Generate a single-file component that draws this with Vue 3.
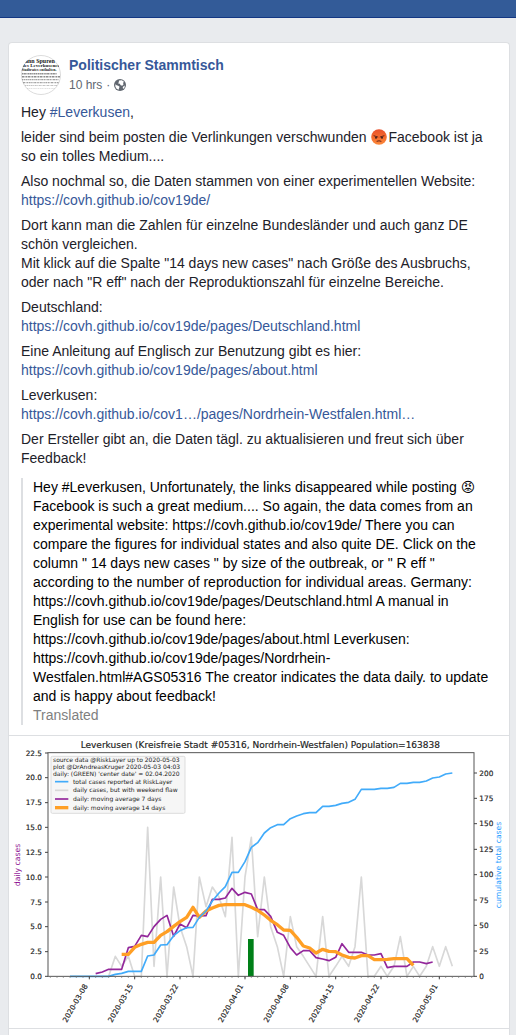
<script setup>
const originX = 241
const dayStep = 19.44

// Heights in chart units below the inner group's origin; zero cases sits at 304.
const total = [304, 304, 304, 304, 304, 304, 304, 298, 295, 289, 289, 289, 243, 240, 210, 209, 182, 167, 158, 157, 127, 108, 78, 54, 35, -8, -8, -40, -83, -97, -126, -142, -151, -151, -169, -177, -184, -187, -187, -206, -206, -209, -215, -218, -227, -257, -257, -257, -260, -260, -263, -275, -275, -278, -278, -282, -291, -294, -303, -306]
const cases = [0, 2, 1, 2, 0, 0, 15, 1, 10, 0, 9, 5, 3, 0, 10, 7, 9, 8, 6, 14, 0, 10, 14, 4, 10, 5, 3, 0, 6, 3, 2, 1, 0, 6, 0, 1, 2, 1, 3, 10, 0, 0, 1, 0, 1, 4, 0, 1, 0, 1, 3, 1, 3, 1]
const weekAverage = [296, 291, 283, 283, 283, 218, 214, 181, 185, 155, 133, 121, 184, 147, 158, 121, 123, 122, 73, 73, 69, 40, 61, 52, 57, 104, 104, 124, 172, 181, 218, 240, 227, 227, 248, 252, 257, 247, 206, 232, 232, 232, 240, 240, 236, 278, 274, 274, 274, 261, 261, 266, 261]
const fortnightAverage = [238, 238, 217, 208, 202, 202, 181, 170, 154, 140, 127, 97, 127, 108, 99, 91, 89, 89, 89, 89, 97, 106, 120, 136, 149, 165, 166, 187, 213, 219, 234, 223, 229, 230, 240, 247, 249, 242, 242, 254, 254, 253, 251, 251, 251, 271]

const dayX = (day) => Math.round(originX + dayStep * day)
const line = (values, start) => values.map((v, i) => `${dayX(start + i)},${v}`).join(' ')

const totalLine = line(total, -3)
const casesLine = line(cases.map((c) => Math.round(304 - c * 29.8)), 3)
const weekLine = line(weekAverage, 1)
const fortnightLine = line(fortnightAverage, 5)

const leftTicks = Array.from({ length: 10 }, (_, i) => ({
  label: (i * 2.5).toFixed(1),
  y: Math.round(304 - i * 74.5)
}))
const rightTicks = Array.from({ length: 9 }, (_, i) => ({
  label: String(i * 25),
  y: Math.round(304 - i * 76.3)
}))
const dateTicks = [
  { label: '2020-03-08', day: 0 },
  { label: '2020-03-15', day: 7 },
  { label: '2020-03-22', day: 14 },
  { label: '2020-04-01', day: 24 },
  { label: '2020-04-08', day: 31 },
  { label: '2020-04-15', day: 38 },
  { label: '2020-04-22', day: 45 },
  { label: '2020-05-01', day: 54 }
]
const minorDays = Array.from({ length: 66 }, (_, i) => i - 6)
const legend = [
  { label: 'total cases reported at RiskLayer', kind: 'total' },
  { label: 'daily cases, but with weekend flaw', kind: 'cases' },
  { label: 'daily: moving average 7 days', kind: 'week' },
  { label: 'daily: moving average 14 days', kind: 'fortnight' }
]
</script>

<template>
  <div class="page">
    <header class="topbar"></header>
    <article class="card">
      <div class="body">
        <div class="author">
          <a href="#" class="avatar" aria-label="Politischer Stammtisch">
            <svg viewBox="0 0 40 40" width="40" height="40">
              <defs>
                <clipPath id="round"><circle cx="20" cy="20" r="20" /></clipPath>
              </defs>
              <circle cx="20" cy="20" r="19.5" fill="#fff" stroke="#dcdcdc" />
              <g clip-path="url(#round)" class="print">
                <text x="4" y="8" font-size="6">ann Spuren</text>
                <text x="1" y="12" font-size="5">des Leverkusener</text>
                <text x="0" y="16" font-size="4">Stadtrates enthalten.</text>
                <g stroke="#444" stroke-width="1.4" opacity="0.6">
                  <path d="M1 18.700H36" stroke-dasharray="1.500 .4 2 .5 1 .4" />
                  <path d="M1 21.700H39" stroke-dasharray="2 .5 1 .4 1.500 .6" />
                </g>
                <g stroke="#666" stroke-width="1.2" opacity="0.6">
                  <path d="M1 24.700H38" stroke-dasharray="1 .5 2 .5 1.500 .4" />
                  <path d="M2 27.700H38" stroke-dasharray="2 .6 1 .4 1 .6" />
                </g>
                <g stroke="#999" opacity="0.6">
                  <path d="M4 30.500H36" stroke-dasharray="1 .5 2 .6" />
                  <path d="M6 33.500H34" stroke-dasharray="1.500 .6 1 .5" opacity="0.5" />
                </g>
              </g>
            </svg>
          </a>
          <div class="who">
            <a href="#" class="name">Politischer Stammtisch</a>
            <div class="meta">
              <span>10 hrs</span><span>·</span>
              <svg viewBox="0 0 12 12" width="12" height="12" role="img" aria-label="Public">
                <circle cx="6" cy="6" r="6" fill="#616770" />
                <path d="M5 1.500L7.800 1.200 10 2.800 9 4 9.600 5.200 8.300 6.800 6.700 6.200 5.800 4.800 4.200 4.600 4.800 3Z" fill="#fff" />
                <path d="M1.300 5.200L2.600 6.200 4.200 6.800 5.600 7.800 5 9.200 4.600 10.800 2.600 9.700 1.400 7.800Z" fill="#fff" />
                <path d="M10.900 6.500L10.500 8.300 9.200 9.900 8.700 8.800 9.500 7.300Z" fill="#fff" />
              </svg>
            </div>
          </div>
        </div>

        <div class="message">
          <p>Hey <a href="#">#Leverkusen</a>,</p>
          <p>leider sind beim posten die Verlinkungen verschwunden <svg class="emoji" viewBox="0 0 16 16" width="16" height="16" role="img" aria-label="pouting face">
            <defs>
              <linearGradient id="rage" x1="0" y1="0" x2="0" y2="1">
                <stop offset="0" stop-color="#e8502c" />
                <stop offset="0.5" stop-color="#f56a2c" />
                <stop offset="1" stop-color="#fb8a3c" />
              </linearGradient>
            </defs>
            <circle cx="8" cy="8" r="7.800" fill="url(#rage)" />
            <path d="M3 6.800L6.800 8M13 6.800L9.200 8" stroke="#64231a" stroke-linecap="round" />
            <circle cx="5" cy="8.800" r="1" fill="#40201c" />
            <circle cx="11" cy="8.800" r="1" fill="#40201c" />
            <path d="M6 12.200Q8 11.200 10 12.200" fill="none" stroke="#64231a" stroke-linecap="round" />
          </svg>Facebook ist ja so ein tolles Medium....</p>
          <p>Also nochmal so, die Daten stammen von einer experimentellen Website: <a href="#">https://covh.github.io/cov19de/</a></p>
          <p>Dort kann man die Zahlen für einzelne Bundesländer und auch ganz DE schön vergleichen.<br />Mit klick auf die Spalte "14 days new cases" nach Größe des Ausbruchs, oder nach "R eff" nach der Reproduktionszahl für einzelne Bereiche.</p>
          <p>Deutschland:<br /><a href="#">https://covh.github.io/cov19de/pages/Deutschland.html</a></p>
          <p>Eine Anleitung auf Englisch zur Benutzung gibt es hier:<br /><a href="#">https://covh.github.io/cov19de/pages/about.html</a></p>
          <p>Leverkusen:<br /><a href="#">https://covh.github.io/cov1…/pages/Nordrhein-Westfalen.html…</a></p>
          <p>Der Ersteller gibt an, die Daten tägl. zu aktualisieren und freut sich über Feedback!</p>
        </div>

        <blockquote class="translation">
          Hey #Leverkusen, Unfortunately, the links disappeared while posting <span class="glyph">😡</span> Facebook is such a great medium.... So again, the data comes from an experimental website: https://covh.github.io/cov19de/ There you can compare the figures for individual states and also quite DE. Click on the column " 14 days new cases " by size of the outbreak, or " R eff " according to the number of reproduction for individual areas. Germany: https://covh.github.io/cov19de/pages/Deutschland.html A manual in English for use can be found here: https://covh.github.io/cov19de/pages/about.html Leverkusen: https://covh.github.io/cov19de/pages/Nordrhein-Westfalen.html#AGS05316 The creator indicates the data daily. to update and is happy about feedback!
          <div class="translated">Translated</div>
        </blockquote>
      </div>

      <figure class="figure">
        <svg class="chart" viewBox="0 0 1500 876" role="img" aria-label="Leverkusen cases over time">
          <text x="754" y="36" class="title" text-anchor="middle">Leverkusen (Kreisfreie Stadt #05316, Nordrhein-Westfalen) Population=163838</text>
          <g transform="translate(0 417)">
            <polyline :points="casesLine" class="series cases" />
            <rect x="717" y="192" width="17" height="112" fill="#008018" />
            <polyline :points="weekLine" class="series week" />
            <polyline :points="fortnightLine" class="series fortnight" />
            <polyline :points="totalLine" class="series total" />

            <rect x="117" y="-367" width="1278" height="671" class="frame" />
            <g v-for="tick in leftTicks" :key="'l' + tick.label">
              <path :d="`M108 ${tick.y}H117`" class="tick" />
              <text x="99" :y="tick.y + 8" class="label" text-anchor="end">{{ tick.label }}</text>
            </g>
            <g v-for="tick in rightTicks" :key="'r' + tick.label">
              <path :d="`M1395 ${tick.y}H1404`" class="tick" />
              <text x="1411" :y="tick.y + 8" class="label">{{ tick.label }}</text>
            </g>
            <path v-for="day in minorDays" :key="day" :d="`M${dayX(day)} 304v5`" class="tick minor" />
            <g v-for="tick in dateTicks" :key="tick.label">
              <path :d="`M${dayX(tick.day)} 304v9`" class="tick" />
              <text :transform="`translate(${dayX(tick.day) - 4} 333) rotate(-60)`" class="label" text-anchor="end">{{ tick.label }}</text>
            </g>
          </g>

          <rect x="126" y="61" width="402" height="171" rx="4" class="legend-box" />
          <text x="132" y="79" class="small">source data @RiskLayer up to 2020-05-03</text>
          <text x="132" y="99" class="small">plot @DrAndreasKruger 2020-05-03 04:03</text>
          <text x="132" y="119" class="small">daily: (GREEN) 'center date' = 02.04.2020</text>
          <g v-for="(item, i) in legend" :key="item.kind">
            <path :d="`M138 ${137 + i * 26}H178`" class="series" :class="item.kind" />
            <text x="192" :y="143 + i * 26" class="small">{{ item.label }}</text>
          </g>

          <text transform="translate(33 387) rotate(-90)" class="axis purple" text-anchor="middle">daily cases</text>
          <text transform="translate(1477 387) rotate(-90)" class="axis blue" text-anchor="middle">cumulative total cases</text>
        </svg>
      </figure>
    </article>
  </div>
</template>

<style>
body {
  background: #e9ebee;
}
</style>

<style scoped>
.page {
  box-sizing: border-box;
  display: flex;
  flex-direction: column;
  min-height: 100vh;
  font-family: "Liberation Sans", Arial, sans-serif;
  font-size: 14px;
  line-height: 19px;
  color: #1d2129;
}
.topbar {
  height: 17px;
  background: #335b98;
  border-bottom: 1px solid #133783;
}
.card {
  flex: 1;
  margin: 24px 6px 0 8px;
  background: #fff;
  border: 1px solid #dddfe2;
  border-bottom: 0;
  border-radius: 4px 4px 0 0;
}
.body {
  padding: 12px 12px 10px;
}
a {
  color: #365899;
  text-decoration: none;
}
.author {
  display: flex;
  gap: 8px;
  margin-bottom: 8px;
}
.avatar {
  display: block;
  height: 40px;
}
.print {
  font-family: "Liberation Serif", serif;
  font-weight: bold;
  fill: #222;
}
.name {
  display: block;
  font-weight: bold;
  line-height: 20px;
}
.meta {
  display: flex;
  align-items: center;
  gap: 4px;
  font-size: 12px;
  line-height: 20px;
  color: #616770;
}
p {
  margin: 0 0 6px;
}
p:last-child {
  margin-bottom: 0;
}
.emoji {
  vertical-align: -3px;
  margin: 0 1px;
}
.translation {
  margin: 10px 0 0;
  padding-left: 10px;
  border-left: 2px solid #dddfe2;
  color: #000;
}
.glyph {
  font-family: "DejaVu Sans", sans-serif;
  line-height: 1;
}
.translated {
  color: #7f7f7f;
}
.figure {
  margin: 0;
  border-top: 1px solid #dddfe2;
  border-bottom: 1px solid #dddfe2;
}
.chart {
  display: block;
  width: 100%;
  font-family: "DejaVu Sans", sans-serif;
  fill: #222;
}
.title {
  font-size: 27px;
  stroke: #222;
  stroke-width: 0.5px;
}
.label {
  font-size: 22px;
  stroke: #222;
  stroke-width: 0.5px;
}
.small {
  font-size: 18px;
}
.axis {
  font-size: 23px;
}
.purple {
  fill: #8b0a91;
}
.blue {
  fill: #1e9bff;
}
.series {
  fill: none;
  stroke-linejoin: round;
}
.total {
  stroke: #41abfa;
  stroke-width: 5;
}
.cases {
  stroke: #d8d8d8;
  stroke-width: 5;
}
.week {
  stroke: #93279b;
  stroke-width: 5;
}
.fortnight {
  stroke: #ff9f25;
  stroke-width: 10;
}
.frame {
  fill: none;
  stroke: #555;
  stroke-width: 3;
}
.tick {
  stroke: #444;
  stroke-width: 3;
}
.minor {
  stroke: #777;
  stroke-width: 2;
}
.legend-box {
  fill: #f6f6f6;
  stroke: #ddd;
  stroke-width: 3;
}
</style>
